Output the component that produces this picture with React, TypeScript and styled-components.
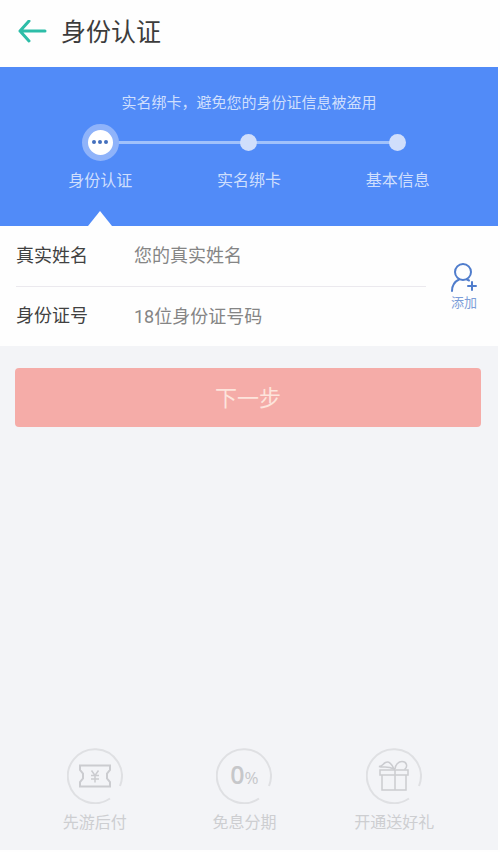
import React from 'react';
import styled, { createGlobalStyle } from 'styled-components';

const GlobalStyle = createGlobalStyle`
  * { box-sizing: border-box; }
  body {
    margin: 0;
    background: #fefefe;
    font-family: Roboto, "Noto Sans CJK SC", sans-serif;
  }
  button, input { font: inherit; }
`;

const Page = styled.div`
  min-height: 100vh;
  display: flex;
  flex-direction: column;
  padding: 0 2px 2px 0;
`;

const Header = styled.header`
  height: 67px;
  display: flex;
  align-items: center;
  gap: 14px;
  padding: 0 18px 4px;
`;

const BackButton = styled.button`
  display: flex;
  padding: 0;
  border: 0;
  background: none;
  color: #2dbda8;
  cursor: pointer;
`;

const Title = styled.h1`
  margin: 0;
  padding-top: 2px;
  font-size: 25px;
  line-height: 36px;
  font-weight: 400;
  color: #3c3c3c;
`;

const Banner = styled.section`
  height: 159px;
  background: #518bf8;
  color: #cfdffd;
  display: flex;
  flex-direction: column;
  padding: 24px 26px 0;
`;

const Tagline = styled.p`
  margin: 0 0 8px;
  text-align: center;
  font-size: 15px;
  line-height: 24px;
`;

const Steps = styled.ol`
  flex: 1;
  margin: 0;
  padding: 0;
  list-style: none;
  display: grid;
  grid-template-columns: repeat(3, 1fr);
`;

const Step = styled.li<{ $current?: boolean }>`
  position: relative;
  display: flex;
  flex-direction: column;
  align-items: center;

  &:not(:last-child)::before {
    content: "";
    position: absolute;
    top: 18px;
    left: 50%;
    width: 100%;
    height: 3px;
    background: #a0c1fb;
  }

  &::after {
    content: "";
    display: ${(p) => (p.$current ? 'block' : 'none')};
    margin-top: auto;
    border: 12px solid transparent;
    border-top: 0;
    border-bottom: 15px solid #fefefe;
  }
`;

const Marker = styled.span`
  position: relative;
  height: 38px;
  display: flex;
  align-items: center;
`;

const Dot = styled.span`
  width: 17px;
  height: 17px;
  border-radius: 50%;
  background: #d0defb;
`;

const CurrentDot = styled.span`
  width: 37px;
  height: 37px;
  border: 6px solid #8fb3fa;
  border-radius: 50%;
  background: #fff;
  display: flex;
  align-items: center;
  justify-content: center;
  gap: 2px;
`;

const Pip = styled.i`
  width: 4px;
  height: 4px;
  border-radius: 50%;
  background: #4470bd;
`;

const StepLabel = styled.span`
  margin-top: 7px;
  font-size: 16px;
  line-height: 26px;
`;

const Form = styled.form`
  flex: 1;
  display: flex;
  flex-direction: column;
`;

const Fields = styled.div`
  display: flex;
  align-items: center;
  height: 120px;
  padding-left: 16px;
`;

const Rows = styled.div`
  flex: 1;
  min-width: 0;
`;

const Row = styled.div`
  display: flex;
  align-items: center;
  height: 60px;
  padding-bottom: 1px;

  & + & { border-top: 1px solid #ebe9ee; }
`;

const FieldLabel = styled.label`
  width: 118px;
  flex: none;
  font-size: 18px;
  line-height: 28px;
  color: #414141;
`;

const TextInput = styled.input`
  flex: 1;
  min-width: 0;
  height: 40px;
  padding: 0;
  border: 0;
  outline: 0;
  background: none;
  font-size: 18px;
  color: #414141;

  &::placeholder { color: #858585; opacity: 1; }
`;

const AddButton = styled.button`
  width: 72px;
  flex: none;
  display: flex;
  flex-direction: column;
  align-items: center;
  padding: 3px 0 0 4px;
  border: 0;
  background: none;
  color: #507dcc;
  font-size: 13px;
  line-height: 20px;
  cursor: pointer;
`;

const AddText = styled.span`
  color: #7c9dd8;
`;

const Content = styled.main`
  flex: 1;
  display: flex;
  flex-direction: column;
  justify-content: space-between;
  background: #f3f4f7;
  padding: 22px 17px 15px 15px;
`;

const NextButton = styled.button`
  height: 59px;
  padding: 0 0 4px;
  border: 0;
  border-radius: 4px;
  background: #f5aca8;
  color: #fde4dc;
  font-size: 22px;
  cursor: pointer;
`;

const Benefits = styled.ul`
  margin: 0;
  padding: 0 12px 0 5px;
  list-style: none;
  display: grid;
  grid-template-columns: repeat(3, 1fr);
`;

const Benefit = styled.li`
  display: flex;
  flex-direction: column;
  align-items: center;
  gap: 7px;
  font-size: 16px;
  line-height: 24px;
  color: #cdced1;
  white-space: nowrap;
`;

const Badge = styled.div`
  width: 56px;
  height: 56px;
  display: grid;
  place-items: center;

  & > * { grid-area: 1 / 1; }
`;

const Rate = styled.span`
  font-family: "Open Sans", sans-serif;
  font-size: 17px;
  line-height: 26px;
  color: #c6c7ca;
`;

const RateValue = styled.strong`
  font-size: 25px;
  font-weight: 600;
`;

const Ring = () => (
  <svg width="56" height="56" viewBox="0 0 56 56" fill="none" stroke="#dfe0e3" strokeWidth="2" aria-hidden="true">
    <path d="M43 50.500A27 27 0 1 1 53 38" />
  </svg>
);

const TicketIcon = () => (
  <svg width="32" height="24" viewBox="0 0 32 24" fill="none" stroke="#cbccd0" strokeWidth="2" aria-hidden="true">
    <path d="M1 1.500h30v4.500l-3 3.500v5l3 3.500v4.500H1v-4.500l3-3.500v-5L1 6z" />
    <path d="M12.500 6.500l3.500 5 3.500-5M16 11.500v7M12 11.500h8M12 15h8" strokeWidth="1.500" />
  </svg>
);

const GiftIcon = () => (
  <svg width="32" height="32" viewBox="0 0 32 32" fill="none" stroke="#cbccd0" strokeWidth="1.500" aria-hidden="true">
    <path d="M2 10h28v5H2zM4 15h24v15H4zM17 10v20" />
    <path d="M16 9C14 4 11 1 7.500 2.500 4.500 4 5 6 1 6.500 6 8 9 5.500 16 9zM17 9c0-4 3.500-7.500 7-7.500 5 0 6 5.500 2.500 8" />
  </svg>
);

const benefits = [
  { label: '先游后付', icon: <TicketIcon /> },
  { label: '免息分期', icon: <Rate><RateValue>0</RateValue>%</Rate> },
  { label: '开通送好礼', icon: <GiftIcon /> },
];

const steps = ['身份认证', '实名绑卡', '基本信息'];

export default function App() {
  return (
    <Page>
      <GlobalStyle />
      <Header>
        <BackButton type="button" aria-label="返回">
          <svg width="29" height="24" viewBox="0 0 29 24" fill="none" stroke="currentColor" strokeWidth="3" strokeLinecap="round" strokeLinejoin="round">
            <path d="M27 11H2M11 1L2 11l9 10" />
          </svg>
        </BackButton>
        <Title>身份认证</Title>
      </Header>
      <Banner>
        <Tagline>实名绑卡，避免您的身份证信息被盗用</Tagline>
        <Steps>
          {steps.map((label, i) => (
            <Step key={label} $current={i === 0} aria-current={i === 0 ? 'step' : undefined}>
              <Marker>
                {i === 0 ? <CurrentDot><Pip /><Pip /><Pip /></CurrentDot> : <Dot />}
              </Marker>
              <StepLabel>{label}</StepLabel>
            </Step>
          ))}
        </Steps>
      </Banner>
      <Form onSubmit={(e) => e.preventDefault()}>
        <Fields>
          <Rows>
            <Row>
              <FieldLabel htmlFor="name">真实姓名</FieldLabel>
              <TextInput id="name" placeholder="您的真实姓名" />
            </Row>
            <Row>
              <FieldLabel htmlFor="idno">身份证号</FieldLabel>
              <TextInput id="idno" placeholder="18位身份证号码" />
            </Row>
          </Rows>
          <AddButton type="button">
            <svg width="28" height="30" viewBox="0 0 28 30" fill="none" stroke="currentColor" strokeWidth="2" strokeLinecap="round" aria-hidden="true">
              <circle cx="13" cy="9" r="8" />
              <path d="M2 28c0-6 3-9.500 7-11.500M17 16.500l2 1M22 19v8M18 23h8" />
            </svg>
            <AddText>添加</AddText>
          </AddButton>
        </Fields>
        <Content>
          <NextButton type="submit">下一步</NextButton>
          <Benefits>
            {benefits.map((b) => (
              <Benefit key={b.label}>
                <Badge><Ring />{b.icon}</Badge>
                {b.label}
              </Benefit>
            ))}
          </Benefits>
        </Content>
      </Form>
    </Page>
  );
}
